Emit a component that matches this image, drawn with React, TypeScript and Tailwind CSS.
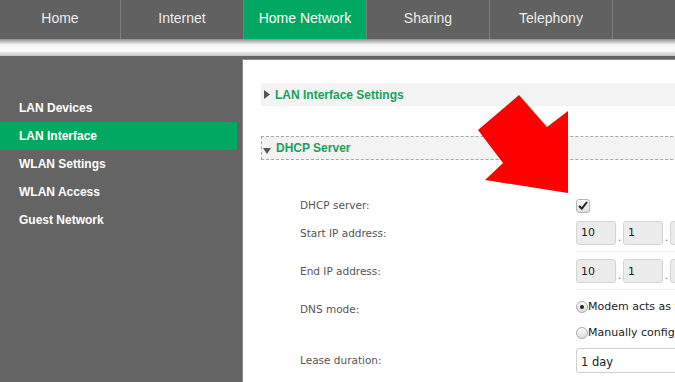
import { useState } from 'react';

const TABS = ['Home', 'Internet', 'Home Network', 'Sharing', 'Telephony', ''];
const MENU = ['LAN Devices', 'LAN Interface', 'WLAN Settings', 'WLAN Access', 'Guest Network'];

function IpInputs({ values }: { values: string[] }) {
  return (
    <div className="flex items-end">
      {values.map((v, i) => (
        <div key={i} className="flex items-end">
          {i > 0 && <span className="w-[7px] text-center text-[10px] leading-[10px] text-[#666] pb-[2px]">.</span>}
          <div className="flex h-[24px] w-[40px] shrink-0 items-center rounded-[3px] border border-[#d4d4d4] bg-[#ececec] px-[4px] pt-[2px] text-[11px] text-[#222]">
            {v}
          </div>
        </div>
      ))}
    </div>
  );
}

function Row({ label, h, children }: { label: string; h: string; children?: React.ReactNode }) {
  return (
    <div className={`flex items-center ${h}`}>
      <div className="w-[315px] shrink-0 pl-[39px] text-[10.5px] text-[#555]">{label}</div>
      <div className="flex-1">{children}</div>
    </div>
  );
}

export default function App() {
  const [active] = useState('Home Network');

  return (
    <div className="relative h-[382px] w-[675px] overflow-hidden bg-[#646464] font-['Liberation_Sans',Arial,sans-serif]">
      {/* Top navigation */}
      <div className="flex h-[39px] bg-[#616161]">
        {TABS.map((t, i) => (
          <div
            key={i}
            className={[
              'flex h-full shrink-0 items-center justify-center text-[14px] pb-[2px]',
              i === TABS.length - 1 ? 'flex-1' : i === 0 ? 'w-[120px]' : 'w-[123px]',
              i > 0 ? 'border-l border-[#7c7c7c]' : '',
              t === active ? 'bg-[#00a862] text-white' : 'text-[#ececec]',
            ].join(' ')}
          >
            {t}
          </div>
        ))}
      </div>

      {/* Shiny band */}
      <div className="h-[17px] bg-[linear-gradient(to_bottom,#8f8f8f_0px,#d8d8d8_4px,#f8f8f8_6px,#fbfbfb_12px,#e0e0e0_14px,#c4c4c4_17px)]" />

      <div className="flex">
        {/* Sidebar */}
        <div className="w-[242px] shrink-0 pt-[38px]">
          {MENU.map((m) => (
            <div
              key={m}
              className={[
                'flex h-[28px] w-[237px] items-center pl-[19px] text-[12px] font-bold text-white',
                m === 'LAN Interface' ? 'bg-[#00a862]' : '',
              ].join(' ')}
            >
              {m}
            </div>
          ))}
        </div>

        {/* Content */}
        <div className="mt-[3px] h-[340px] flex-1 border-l border-t border-[#8a8a8a] bg-white pt-[23px] pl-[18px]">
          <div className="flex h-[23px] items-center bg-[#f3f3f3] pl-[3px]">
            <svg width="6" height="9" viewBox="0 0 6 9" className="mr-[5px]">
              <polygon points="0,0 6,4.5 0,9" fill="#555" />
            </svg>
            <span className="text-[12px] font-bold text-[#1aa05e]">LAN Interface Settings</span>
          </div>

          <div className="mt-[30px] flex h-[24px] items-center border-y border-l border-dashed border-[#a8a8a8] bg-[#f3f3f3] pl-[1px]">
            <svg width="8" height="6" viewBox="0 0 8 6" className="mr-[5px] mt-[5px]">
              <polygon points="0,0 8,0 4,6" fill="#555" />
            </svg>
            <span className="text-[12px] font-bold text-[#1aa05e]">DHCP Server</span>
          </div>

          <div className="pt-[36px] font-['DejaVu_Sans',sans-serif]">
            <Row label="DHCP server:" h="h-[19px]">
              <div className="flex h-[14px] w-[14px] items-center justify-center rounded-[3px] border border-[#b5b5b5] bg-[linear-gradient(#fafafa,#dedede)]">
                <svg width="10" height="9" viewBox="0 0 10 9">
                  <path d="M1 5 L3.8 7.6 L9 1" fill="none" stroke="#222" strokeWidth="2" />
                </svg>
              </div>
            </Row>
            <Row label="Start IP address:" h="h-[38px]">
              <div className="border-b border-[#f0f0f0] pb-[6px] pt-[4px]">
                <IpInputs values={['10', '1', '1']} />
              </div>
            </Row>
            <Row label="End IP address:" h="h-[37px]">
              <div className="border-b border-[#f0f0f0] pb-[6px] pt-[6px]">
                <IpInputs values={['10', '1', '1']} />
              </div>
            </Row>
            <div className="flex">
              <div className="w-[315px] shrink-0 pl-[39px] pt-[12px] text-[10.5px] text-[#555]">DNS mode:</div>
              <div className="flex-1 pt-[8px] text-[11px] text-[#222]">
                <div className="flex h-[18px] items-center whitespace-nowrap">
                  <span className="flex h-[12px] w-[12px] shrink-0 items-center justify-center rounded-full border border-[#aaa] bg-[linear-gradient(#fafafa,#dcdcdc)]">
                    <span className="h-[4px] w-[4px] rounded-full bg-[#222]" />
                  </span>
                  Modem acts as the DNS server
                </div>
                <div className="mt-[8px] flex h-[18px] items-center whitespace-nowrap">
                  <span className="h-[12px] w-[12px] shrink-0 rounded-full border border-[#aaa] bg-[linear-gradient(#fafafa,#dcdcdc)]" />
                  Manually configure DNS
                </div>
              </div>
            </div>
            <div className="flex">
              <div className="w-[315px] shrink-0 pl-[39px] pt-[11px] text-[10.5px] text-[#555]">Lease duration:</div>
              <div className="flex-1 pt-[6px]">
                <div className="flex h-[25px] w-[160px] items-end rounded-[3px] border border-[#d0d0d0] bg-white px-[4px] pb-[1px] text-[11.5px] text-[#222]">
                  1 day
                </div>
              </div>
            </div>
          </div>
        </div>
      </div>

      {/* Red arrow annotation */}
      <svg className="absolute left-0 top-0" width="675" height="382" viewBox="0 0 675 382">
        <polygon points="519,95 547,127 568,111 568,193 485,180 503,163 478,130" fill="#ff0000" />
      </svg>
    </div>
  );
}
